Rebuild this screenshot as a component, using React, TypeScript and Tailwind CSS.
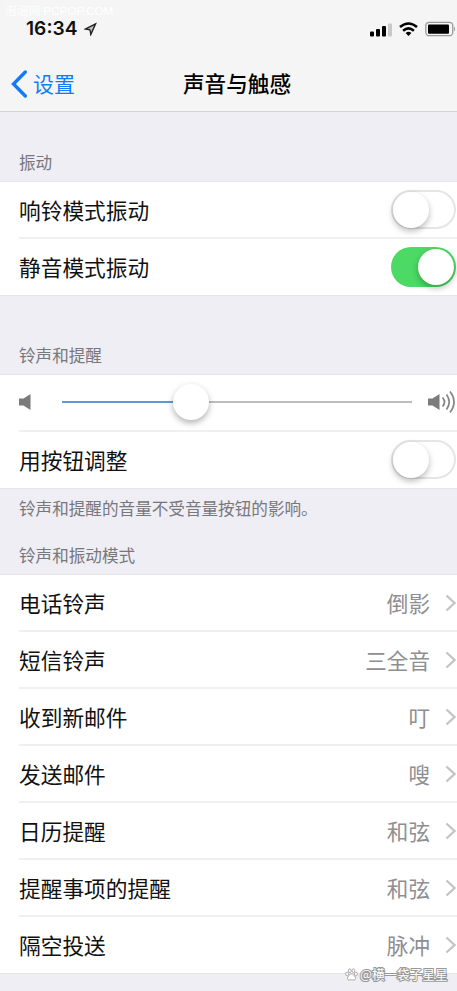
import React from "react";

const ringtones = [
  { label: "电话铃声", value: "倒影" },
  { label: "短信铃声", value: "三全音" },
  { label: "收到新邮件", value: "叮" },
  { label: "发送邮件", value: "嗖" },
  { label: "日历提醒", value: "和弦" },
  { label: "提醒事项的提醒", value: "和弦" },
  { label: "隔空投送", value: "脉冲" },
];

function Switch({ on = false }: { on?: boolean }) {
  return (
    <div
      className={
        on
          ? "flex h-[40px] w-[65px] items-center justify-end rounded-full bg-[#4cd964] pr-[2px]"
          : "flex h-[39px] w-[65px] items-center rounded-full border-2 border-[#e5e5e5] bg-white"
      }
    >
      <div className="h-[36px] w-[36px] rounded-full bg-white shadow-[0_3px_6px_rgba(0,0,0,0.28)]" />
    </div>
  );
}

function Row({
  label,
  last = false,
  children,
}: {
  label: string;
  last?: boolean;
  children?: React.ReactNode;
}) {
  return (
    <div
      className={
        last
          ? "ml-[19px] flex h-[56px] items-center justify-between pb-px pr-[1px]"
          : "ml-[19px] flex h-[57px] items-center justify-between border-b-2 border-[#f0f0f1] pr-[1px]"
      }
    >
      <p className="text-[21.7px] leading-none text-[#111]">{label}</p>
      {children}
    </div>
  );
}

export default function App() {
  return (
    <div className="h-[991px] w-full overflow-hidden bg-[#efeef4] font-['Noto_Sans_CJK_SC',sans-serif]">
      <header className="relative h-[112px] border-b border-[#d4d4d8] bg-[#f5f5f5]">
        <p className="absolute left-[5px] top-[3px] font-['Liberation_Sans','Noto_Sans_CJK_SC',sans-serif] text-[11.7px] leading-[15px] text-white">
          泡泡网 PCPOP.COM
        </p>
        <div className="flex h-[58px] items-center justify-between pl-[26px] pr-[1px]">
          <div className="flex items-center gap-[6px]">
            <span className="font-['Inter',sans-serif] text-[19.2px] font-semibold leading-none text-[#111]">
              16:34
            </span>
            <svg width="13" height="14" viewBox="0 0 13 14">
              <path
                d="M11.6 1.8 L1.4 7 L6 7.8 L6.8 12.6 Z"
                fill="none"
                stroke="#222"
                strokeWidth="1.3"
              />
              <path d="M12.4 1 L0.6 7 L5.6 7.6 L9.2 4.4 L6.2 8.4 L6.6 13.4 Z" fill="#222" fillOpacity="0.35" />
            </svg>
          </div>
          <div className="flex items-center gap-[7px]">
            <svg width="22" height="15" viewBox="0 0 22 15">
              <rect x="0" y="9.5" width="4" height="5" rx="1" fill="#000" />
              <rect x="6" y="7" width="4" height="7.5" rx="1" fill="#000" />
              <rect x="12" y="4" width="4" height="10.5" rx="1" fill="#000" />
              <rect x="18" y="1.5" width="4" height="13" rx="1" fill="#c9c9c9" />
            </svg>
            <svg width="19" height="14" viewBox="0 0 19 14" fill="none" stroke="#000">
              <path d="M1 5 Q9.5 -2 18 5" strokeWidth="2.6" />
              <path d="M4.1 8.7 Q9.5 4 14.9 8.7" strokeWidth="2.5" />
              <path d="M6.6 11 Q9.5 8.4 12.4 11 L9.5 13.9 Z" fill="#000" stroke="none" />
            </svg>
            <svg width="31" height="16" viewBox="0 0 31 16">
              <rect x="0.8" y="1.3" width="27" height="13.4" rx="3.5" fill="none" stroke="#999" strokeWidth="1.3" />
              <rect x="3" y="3.4" width="21" height="9.4" rx="1" fill="#000" />
              <path d="M29 5.5 Q31 8 29 10.5 Z" fill="#999" />
            </svg>
          </div>
        </div>
        <div className="relative flex h-[51px] items-center pl-[11px]">
          <svg width="16" height="28" viewBox="0 0 16 28" fill="none" stroke="#127bf5" strokeWidth="3.4">
            <path d="M14.3 2 L2.5 14 L14.3 26" strokeLinecap="round" />
          </svg>
          <span className="ml-[6px] pb-px text-[21px] leading-none text-[#127bf5]">设置</span>
          <h1 className="absolute left-[183px] pb-px text-[21.6px] font-medium leading-none text-black">
            声音与触感
          </h1>
        </div>
      </header>

      <h2 className="flex h-[70px] items-end pb-[11px] pl-[19px] text-[16.6px] leading-none text-[#77777c]">
        振动
      </h2>
      <section className="bg-white shadow-[0_0_0_1px_#e6e5ea]">
        <Row label="响铃模式振动">
          <Switch />
        </Row>
        <Row label="静音模式振动" last>
          <Switch on />
        </Row>
      </section>

      <h2 className="flex h-[80px] items-end pb-[11px] pl-[19px] text-[16.6px] leading-none text-[#77777c]">
        铃声和提醒
      </h2>
      <section className="bg-white shadow-[0_0_0_1px_#e6e5ea]">
        <div className="ml-[19px] flex h-[57px] items-center border-b-2 border-[#f0f0f1] pb-[2px] pr-px">
          <svg width="13" height="18" viewBox="0 0 13 18" fill="#7b7b7b">
            <path d="M0 5.5 H4.5 L11.5 1 V17 L4.5 12.5 H0 Z" />
          </svg>
          <div className="relative ml-[30px] flex h-[36px] w-[350px] items-center">
            <div className="h-[2px] w-[130px] bg-[#5b9bdc]" />
            <div className="h-[2px] flex-1 bg-[#bdbdbf]" />
            <div className="absolute left-[111px] h-[36px] w-[36px] rounded-full bg-white shadow-[0_3px_6px_rgba(0,0,0,0.3)]" />
          </div>
          <svg className="ml-auto" width="28" height="24" viewBox="0 0 28 24">
            <path d="M0 8.5 H4.5 L11.5 4 V20 L4.5 15.5 H0 Z" fill="#7b7b7b" />
            <g fill="none" stroke="#858585" strokeWidth="1.7">
              <path d="M14.5 7.5 Q18.5 12 14.5 16.5" />
              <path d="M18.5 4.5 Q24 12 18.5 19.5" />
              <path d="M22 1.5 Q30 12 22 22.5" />
            </g>
          </svg>
        </div>
        <Row label="用按钮调整" last>
          <Switch />
        </Row>
      </section>

      <p className="flex h-[40px] items-center pl-[19px] text-[16.6px] leading-none text-[#77777c]">
        铃声和提醒的音量不受音量按钮的影响。
      </p>
      <h2 className="flex h-[47px] items-end pb-[11px] pl-[19px] text-[16.6px] leading-none text-[#77777c]">
        铃声和振动模式
      </h2>
      <section className="bg-white shadow-[0_0_0_1px_#e6e5ea]">
        {ringtones.map((item, index) => (
          <Row key={item.label} label={item.label} last={index === ringtones.length - 1}>
            <div className="flex items-center gap-[15px]">
              <span className="text-[21.6px] leading-none text-[#8e8e93]">{item.value}</span>
              <svg width="11" height="18" viewBox="0 0 11 18" fill="none" stroke="#c3c3c8" strokeWidth="2.3">
                <path d="M1.5 1.5 L9.5 9 L1.5 16.5" />
              </svg>
            </div>
          </Row>
        ))}
      </section>

      <div className="absolute left-[345px] top-[966px] flex items-center gap-[2px]">
        <svg width="13" height="13" viewBox="0 0 13 13" fill="#fff" stroke="#999" strokeWidth="0.8">
          <ellipse cx="2.2" cy="6" rx="1.5" ry="1.9" />
          <ellipse cx="4.8" cy="2.7" rx="1.4" ry="1.9" />
          <ellipse cx="8.4" cy="2.7" rx="1.4" ry="1.9" />
          <ellipse cx="10.9" cy="6" rx="1.5" ry="1.9" />
          <path d="M6.5 5.8 C8 5.8 10.8 9 10.6 10.6 C10.2 12.8 8 11.8 6.5 11.8 C5 11.8 2.8 12.8 2.4 10.6 C2.2 9 5 5.8 6.5 5.8 Z" />
        </svg>
        <span className="whitespace-nowrap text-[12.6px] leading-[16px] text-white [-webkit-text-stroke:2px_#999] [paint-order:stroke_fill]">
          @横一袋子星星
        </span>
      </div>
    </div>
  );
}
